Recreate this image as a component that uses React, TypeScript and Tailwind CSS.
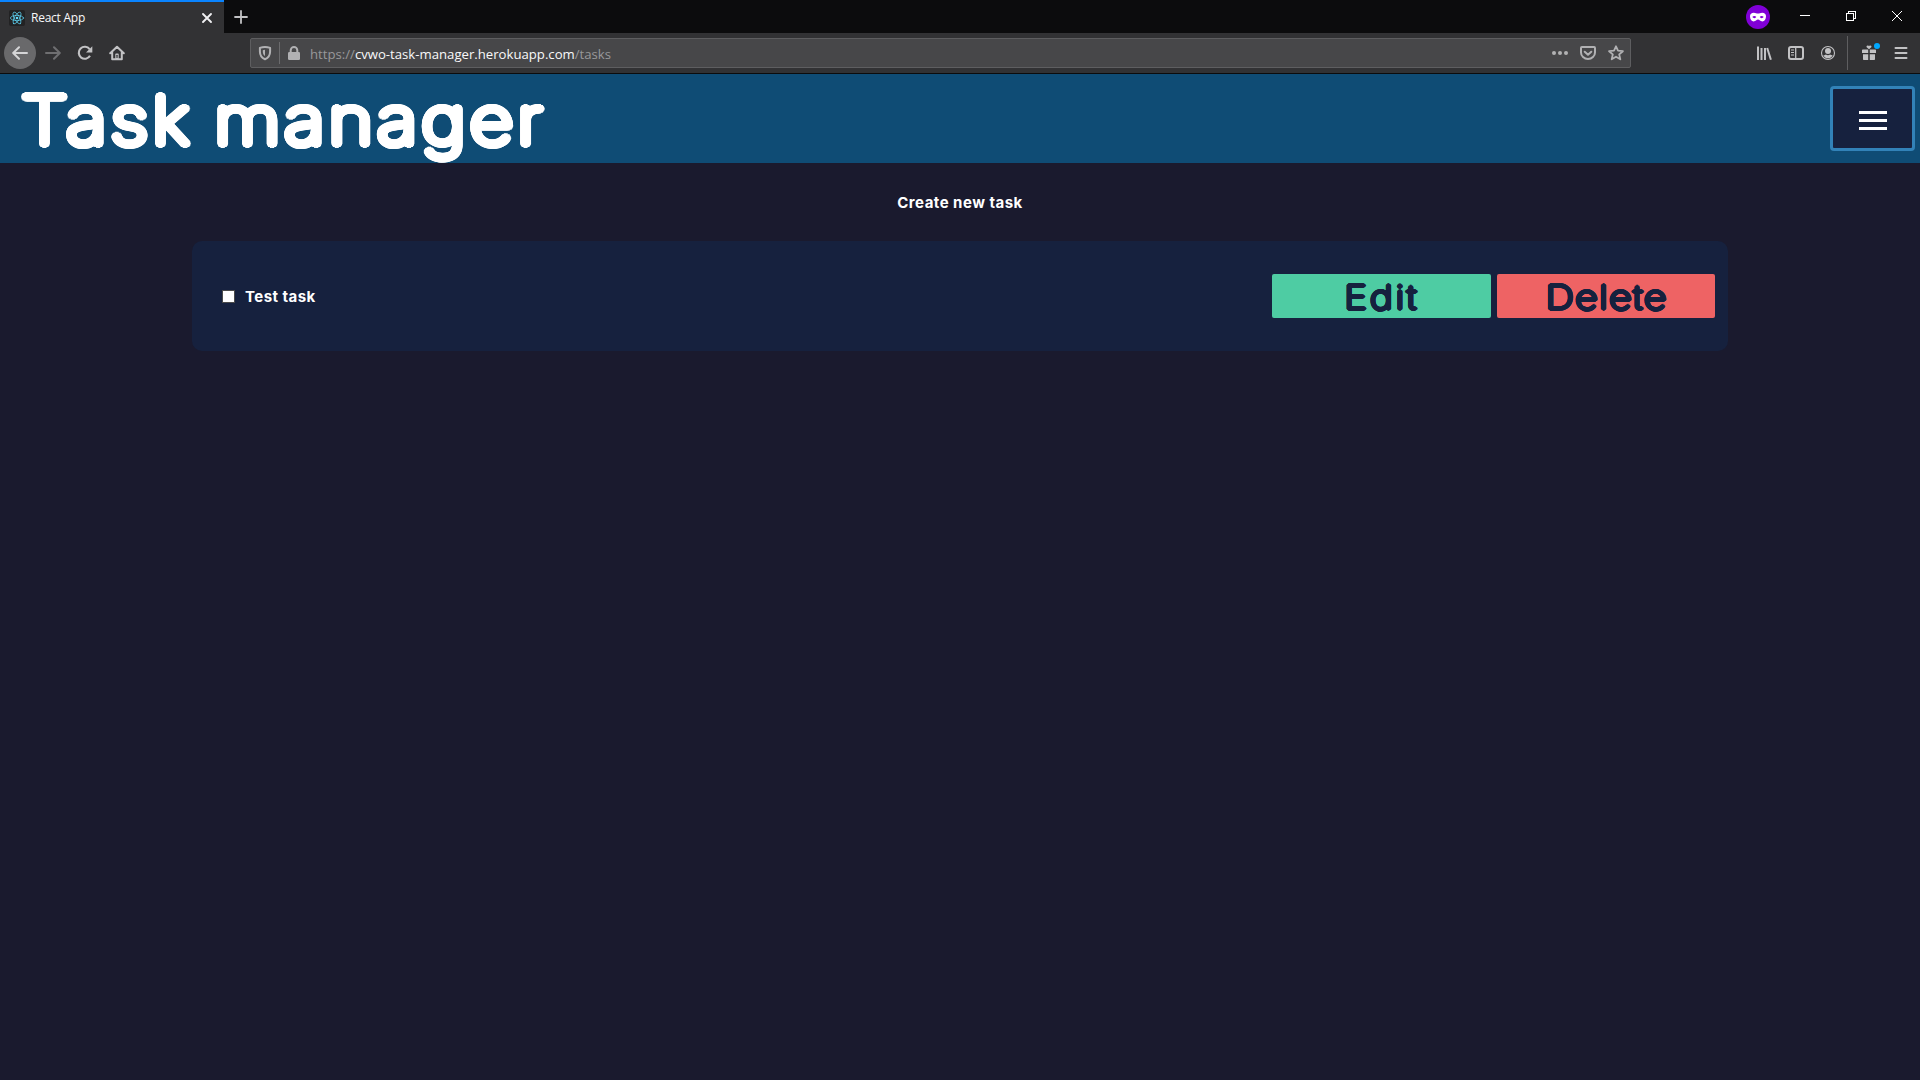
import type { ReactNode } from "react";

/* Dilates a hairline typeface into strokes with round terminals. */
function roundedStroke(radius: number, color: string): string {
  const shadows: string[] = [];
  for (const r of [radius / 2, radius]) {
    for (let i = 0; i < 24; i++) {
      const a = (i * Math.PI) / 12;
      shadows.push(`${(r * Math.cos(a)).toFixed(2)}px ${(r * Math.sin(a)).toFixed(2)}px 0 ${color}`);
    }
  }
  return shadows.join(",");
}

function Icon({ className, children, size = 16 }: { className?: string; children: ReactNode; size?: number }) {
  return (
    <svg
      width={size}
      height={size}
      viewBox={`0 0 ${size} ${size}`}
      fill="none"
      stroke="currentColor"
      strokeWidth="2"
      strokeLinecap="round"
      strokeLinejoin="round"
      className={`shrink-0 ${className ?? ""}`}
    >
      {children}
    </svg>
  );
}

function TabStrip() {
  return (
    <div className="flex h-[33px] bg-[#0c0c0d]">
      <div className="flex w-[224px] items-center border-t-2 border-[#0a84ff] bg-[#323234] pl-[9px] pr-[11px]">
        <Icon className="rounded-[2px] bg-[#222223] text-[#61dafb]">
          <g strokeWidth="0.7">
            <ellipse cx="8" cy="8" rx="6.6" ry="2.6" />
            <ellipse cx="8" cy="8" rx="6.6" ry="2.6" transform="rotate(60 8 8)" />
            <ellipse cx="8" cy="8" rx="6.6" ry="2.6" transform="rotate(120 8 8)" />
          </g>
          <circle cx="8" cy="8" r="1.3" fill="currentColor" stroke="none" />
        </Icon>
        <span className="ml-[6px] grow whitespace-nowrap text-[12px] leading-4 tracking-[-0.25px] text-[#f9f9fa]">React App</span>
        <Icon size={12} className="text-[#f0f0f2]">
          <path d="M2 2l8 8M10 2l-8 8" strokeWidth="1.9" />
        </Icon>
      </div>
      <div className="flex w-[34px] items-center justify-center">
        <Icon className="text-[#c2c2c4]">
          <path d="M8 2v12M2 8h12" strokeWidth="1.8" />
        </Icon>
      </div>
      <div className="grow" />
      <div className="mr-[18px] flex items-start text-white">
        <svg width="24" height="24" viewBox="0 0 24 24" className="mt-[5px]">
          <circle cx="12" cy="12" r="12" fill="#8000d7" />
          <path
            fill="#fff"
            d="M4 11.200C4 9 5.500 7.700 7.800 7.700c1.900 0 2.700.8 4.200.8s2.300-.8 4.200-.8C18.500 7.700 20 9 20 11.200c0 3-1.500 5.200-3.700 5.200-2 0-2.800-1.800-4.300-1.800s-2.300 1.800-4.300 1.800C5.500 16.400 4 14.200 4 11.200z"
          />
          <path
            fill="#8000d7"
            d="M6.300 12.100c.6-.8 1.200-1.200 2-1.200s1.500.400 2 1.200c-.4.700-1.100 1.100-1.900 1.100s-1.600-.4-2.100-1.100zM13.700 12.100c.5-.8 1.200-1.200 2-1.200s1.400.400 2 1.200c-.5.700-1.300 1.100-2.100 1.100s-1.500-.4-1.900-1.100z"
          />
        </svg>
        <svg width="10" height="10" className="ml-[30px] mt-[11px]" shapeRendering="crispEdges">
          <rect x="0" y="4" width="10" height="1" fill="currentColor" />
        </svg>
        <svg width="10" height="10" className="ml-9 mt-[11px]" fill="none" stroke="currentColor" shapeRendering="crispEdges">
          <path d="M0.500 2.500h7v7h-7zM2.500 2.500v-2h7v7h-2" />
        </svg>
        <svg width="10" height="10" className="ml-9 mt-[11px]" fill="none" stroke="currentColor">
          <path d="M0 0l10 10M10 0l-10 10" />
        </svg>
      </div>
    </div>
  );
}

function AddressBar() {
  return (
    <div className="flex h-[30px] w-[1381px] items-center rounded-[2px] border border-[#5e5e60] bg-[#474749] text-[#b1b1b3]">
      <Icon className="ml-[6px]">
        <path d="M8 1.900c1.600 0 3.600.400 5.100 1v3.600c0 3.600-1.900 6.400-5.100 7.700-3.200-1.300-5.100-4.100-5.100-7.700V2.900c1.500-.6 3.500-1 5.100-1z" />
        <path d="M8 4.800v6.300c-1.400-.9-2.200-2.500-2.200-4.600V5.200c.7-.2 1.400-.4 2.200-.4z" fill="currentColor" stroke="none" />
      </Icon>
      <div className="ml-[6px] h-[22px] w-px bg-[#6b6b6d]" />
      <Icon className="ml-[6px]">
        <path d="M4.700 8V5.200a3.300 3.300 0 016.600 0V8" />
        <rect x="2" y="7" width="12" height="8" rx="1.200" fill="currentColor" stroke="none" />
      </Icon>
      <span className="ml-2 grow whitespace-nowrap pt-[2px] text-[13.170px] leading-5 text-[#98989a]">
        https://<span className="text-[#f9f9fa]">cvwo-task-manager.herokuapp.com</span>/tasks
      </span>
      <Icon>
        <g fill="currentColor" stroke="none">
          <circle cx="2" cy="8" r="2" />
          <circle cx="8" cy="8" r="2" />
          <circle cx="14" cy="8" r="2" />
        </g>
      </Icon>
      <Icon className="ml-3">
        <path d="M1.900 2h12.200c.5 0 .9.400.9.900V7.500a7 6.500 0 01-14 0V2.900c0-.5.4-.9.900-.9z" />
        <path d="M4.700 6.700L8 9.800l3.300-3.100" />
      </Icon>
      <Icon className="ml-3 mr-[6px]">
        <path d="M8 1.300l2 4.400 4.900.500-3.700 3.200 1.100 4.900L8 11.700l-4.300 2.600 1.100-4.900L1.100 6.200 6 5.700z" strokeWidth="1.800" />
      </Icon>
    </div>
  );
}

function NavigationBar() {
  return (
    <div className="flex h-[41px] items-center border-b border-[#0c0c0d] bg-[#323234] pl-1 text-[#c2c2c4]">
      <div className="flex size-8 items-center justify-center rounded-full bg-[#69696b]">
        <Icon className="text-[#d5d5d7]">
          <path d="M15 8H1.500M7 2.200L1.200 8 7 13.800" />
        </Icon>
      </div>
      <Icon className="ml-[9px] text-[#6f6f71]">
        <path d="M1 8h13.500M9 2.200L14.800 8 9 13.800" />
      </Icon>
      <Icon className="ml-4">
        <path d="M13 10.800A6 6 0 1112.600 4.200" strokeLinecap="butt" strokeWidth="2.100" />
        <path d="M15.300 1.200v6.300H9z" fill="currentColor" stroke="none" />
      </Icon>
      <Icon className="ml-4">
        <path d="M1.200 8.300L8 1.700l6.800 6.600M3.200 7.500v6.700h9.600V7.500" />
        <path d="M6.300 15V9.500c0-.6.400-1 1-1h1.400c.6 0 1 .4 1 1V15z" fill="currentColor" stroke="none" />
        <path d="M8 10.300v2.200" stroke="#323234" strokeWidth="1.200" />
      </Icon>
      <div className="w-[125px]" />
      <AddressBar />
      <Icon className="ml-[125px]">
        <path d="M2 1.500v13.500M5.500 3v12M9 3v12M11.200 3l3.700 11.700" strokeLinecap="butt" strokeWidth="2" />
      </Icon>
      <Icon className="ml-4">
        <rect x="1" y="2" width="14" height="12" rx="2" />
        <path d="M7.700 2v12" strokeWidth="1.300" />
        <path d="M3 5h3M3 7.500h3M3 10h3" strokeWidth="1" strokeLinecap="butt" />
      </Icon>
      <Icon className="ml-4">
        <circle cx="8" cy="8" r="6.500" strokeWidth="1.100" />
        <circle cx="8" cy="6" r="3" fill="currentColor" stroke="none" />
        <path d="M3.300 10.200c1 .4 1.700-.4 2.600-.8.600.5 1.300.8 2.100.8s1.500-.3 2.100-.8c.9.400 1.600 1.200 2.600.8-.8 1.900-2.500 3.100-4.700 3.100s-3.900-1.200-4.700-3.100z" fill="currentColor" stroke="none" />
      </Icon>
      <div className="ml-[11px] h-[34px] w-px bg-[#5e5e60]" />
      <div className="relative ml-[13px] size-4">
        <Icon>
          <g fill="currentColor" stroke="none">
            <path d="M2 4.500h5.200V8H1V5.500c0-.6.400-1 1-1zM8.800 4.500H14c.6 0 1 .4 1 1V8H8.800zM2 9.300h5.200V15H3c-.6 0-1-.4-1-1zM8.800 9.300H14V14c0 .6-.4 1-1 1H8.800z" />
            <path d="M8 4.300L5.700 2.200C5.100 1.300 6 .1 7 .5c.5.100.800.400 1 .8.200-.4.500-.7 1-.8 1-.4 1.900.8 1.300 1.700z" />
          </g>
        </Icon>
        <div className="absolute -right-[3px] -top-[2px] size-[6px] rounded-full bg-[#00a8ff]" />
      </div>
      <Icon className="ml-4">
        <path d="M2.500 3h11M2.500 8h11M2.500 13h11" strokeWidth="2" />
      </Icon>
    </div>
  );
}

function AppHeader() {
  return (
    <header className="flex h-[89px] items-center justify-between bg-[#0f4c75] pr-[5px]">
      <h1
        className="ml-[21px] mt-[2px] origin-left scale-x-[1.150] whitespace-nowrap font-['Inter',sans-serif] text-[66px] font-thin leading-[80px] tracking-[3.700px] text-white [word-spacing:-4px]"
        style={{ textShadow: roundedStroke(3.9, "#fff") }}
      >
        Task manager
      </h1>
      <button className="mb-px flex h-[65px] w-[85px] flex-col items-center justify-center gap-[5px] rounded-[4px] border-[3px] border-[#3282b8] bg-[#16213e] pt-[5px]">
        <span className="h-[3px] w-7 bg-white" />
        <span className="h-[3px] w-7 bg-white" />
        <span className="h-[3px] w-7 bg-white" />
      </button>
    </header>
  );
}

function TaskButton({ label, className }: { label: string; className: string }) {
  return (
    <button className={`flex h-11 items-center justify-center rounded-[2px] text-[#16213e] ${className}`}>
      <span
        className="mt-[2px] scale-x-[1.180] whitespace-nowrap pl-px font-['Inter',sans-serif] text-[33px] font-thin leading-10"
        style={{ textShadow: roundedStroke(1.7, "#16213e") }}
      >
        {label}
      </span>
    </button>
  );
}

export default function App() {
  return (
    <div className="flex h-[1080px] w-[1920px] flex-col overflow-hidden bg-[#1a1a2e] font-['Open_Sans',sans-serif]">
      <TabStrip />
      <NavigationBar />
      <AppHeader />
      <main className="flex flex-col items-center font-['Inter',sans-serif] text-[15px] font-bold text-white">
        <a className="mt-[28px] leading-6 tracking-[0.480px]">Create new task</a>
        <section className="mt-[26px] flex h-[110px] w-[1536px] items-center rounded-[10px] bg-[#16213e] pl-[30px] pr-[13px]">
          <span className="size-[13px] border border-[#4a4a4a] bg-white" />
          <span className="ml-[10px] mt-px grow leading-6 tracking-[0.450px]">Test task</span>
          <div className="flex gap-[6px]">
            <TaskButton label="Edit" className="w-[219px] bg-[#4ecca3] tracking-[2.500px]" />
            <TaskButton label="Delete" className="w-[218px] bg-[#ee6364] tracking-[1.400px]" />
          </div>
        </section>
      </main>
    </div>
  );
}
